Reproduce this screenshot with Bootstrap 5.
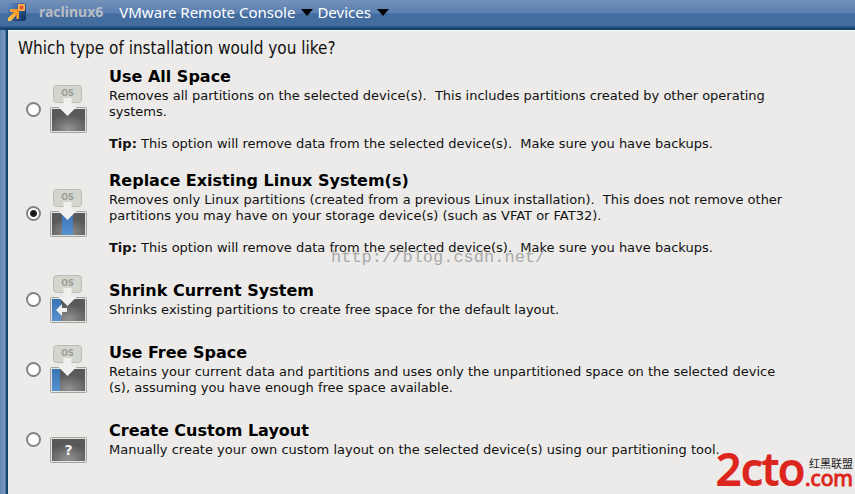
<!DOCTYPE html>
<html lang="en">
<head>
<meta charset="utf-8">
<meta name="viewport" content="width=device-width, initial-scale=1">
<title>raclinux6 - VMware Remote Console</title>
<link href="https://cdn.jsdelivr.net/npm/bootstrap@5.3.0/dist/css/bootstrap.min.css" rel="stylesheet">
<style>
body{font-family:"DejaVu Sans",sans-serif;font-size:13px;line-height:16px;color:#111;background:#ecebe9}
.console-bar{height:30px;padding:0 7px 6px;font-family:"Noto Sans",sans-serif;font-size:15px;line-height:22px;background:linear-gradient(#7391b9 0,#5a7fb0 13px,#436c9f 14px,#436c9f 26px,#1f5080 27px,#123e66 30px)}
.vm-name{color:#b9bdc4;font-weight:700;font-size:14px;margin-left:13px;margin-right:16px}
.menu-btn,.menu-btn:hover{color:#fff;font:inherit}
.menu-btn svg{margin-left:6px}
.frame-edge{width:8px;background:linear-gradient(90deg,#6488b5 0,#7a9ac2 5px,#1b4f7f 6px,#123e66 8px)}
.question{font-family:"DejaVu Sans Condensed","DejaVu Sans",sans-serif;font-size:17px;line-height:20px;font-weight:400}
.install-pane{padding:7px 9px 0 10px;border-top:1px solid #f8f8f8}
.choices{gap:18px;padding:8px 0 24px 8px}
.choice{min-height:50px}
.choice input{appearance:none;width:15px;height:15px;margin:0 8px 0 0;border:2px solid #858380;border-radius:50%;background:#fff}
.choice input:checked{background:radial-gradient(circle,#111 0,#222 3px,#fff 4px)}
.disk-icon{width:40px;height:50px;margin-right:20px}
.choice-text{max-width:680px;white-space:pre-wrap}
.choice-title{font-size:16px;line-height:22px;font-weight:700;color:#000}
.watermark{left:331px;top:248px;font:17px/20px "Liberation Mono",monospace;color:#aaa}
.site-logo{right:2px;bottom:0;color:#dc261d;font-family:"Noto Sans",sans-serif}
.logo-main{font-size:44px;line-height:52px;-webkit-text-stroke:2px #dc261d}
.logo-com{font-size:21px;line-height:18px;padding-bottom:7px;-webkit-text-stroke:1px #dc261d}
.logo-cn{font:11px/12px "Noto Sans CJK SC",sans-serif;color:#222}
</style>
<script src="https://cdn.jsdelivr.net/npm/bootstrap@5.3.0/dist/js/bootstrap.bundle.min.js"></script>
</head>
<body class="min-vh-100 d-flex flex-column position-relative overflow-x-hidden">
<svg width="0" height="0" class="position-absolute" aria-hidden="true">
<defs>
<radialGradient id="metal" cx=".5" cy=".9" r=".65"><stop offset="0" stop-color="#929292"/><stop offset="1" stop-color="#595959"/></radialGradient>
<linearGradient id="blue" x1="0" y1="0" x2="0" y2="1"><stop offset="0" stop-color="#3973b5"/><stop offset="1" stop-color="#5791d0"/></linearGradient>
<linearGradient id="navy" x1="0" y1="0" x2="1" y2="1"><stop offset="0" stop-color="#6390c8"/><stop offset="1" stop-color="#0b2a5c"/></linearGradient>
<linearGradient id="gold" x1="0" y1="1" x2="1" y2="0"><stop offset="0" stop-color="#ffcc54"/><stop offset="1" stop-color="#f58a1f"/></linearGradient>
<g id="os-tag"><rect x="4.5" y="1.5" width="28" height="17" rx="3" fill="#d2d6cd" stroke="#b9bdb5"/><text x="18.5" y="12" text-anchor="middle" font-family="DejaVu Sans" font-size="8" font-weight="700" fill="#999d96">OS</text></g>
<g id="drive"><rect x="1.5" y="23.5" width="36" height="25" rx="1" fill="#e3e3df" stroke="#a3a39f"/><rect x="3" y="25" width="33" height="22" fill="url(#metal)"/></g>
<path id="down-arrow" d="M14.500 14h8v9h5L18.500 32 9.500 23h5z" fill="#f0f0ee"/>
</defs>
</svg>
<header class="console-bar d-flex align-items-center">
<svg width="19" height="20" viewBox="0 0 19 20" aria-hidden="true"><rect x="1" y="1" width="18" height="18" rx="3" fill="url(#navy)"/><path d="M1 19v-3l6-6H3V7h9v10H9.500v-4L4 19z" fill="url(#gold)"/><rect x="11" y="2" width="7" height="7" rx="1" fill="#ffb04a"/><circle cx="14.500" cy="5.500" r="2" fill="#e8502a"/></svg>
<span class="vm-name">raclinux6</span>
<button type="button" class="menu-btn btn btn-link p-0 border-0 text-decoration-none d-flex align-items-center">VMware Remote Console<svg width="12" height="7" aria-hidden="true"><path d="M0 0h12L6 7z"/></svg></button>
<button type="button" class="menu-btn btn btn-link p-0 border-0 text-decoration-none d-flex align-items-center ms-1">Devices<svg width="12" height="7" aria-hidden="true"><path d="M0 0h12L6 7z"/></svg></button>
</header>
<div class="d-flex flex-grow-1">
<div class="frame-edge flex-shrink-0"></div>
<main class="install-pane flex-grow-1">
<form>
<h1 class="question m-0" id="question">Which type of installation would you like?</h1>
<div class="choices d-flex flex-column" role="radiogroup" aria-labelledby="question">
<label class="choice d-flex align-items-center"><input type="radio" name="layout" class="flex-shrink-0"><svg class="disk-icon flex-shrink-0" viewBox="0 0 40 50" aria-hidden="true"><use href="#os-tag"/><use href="#drive"/><use href="#down-arrow"/></svg><span class="choice-text"><span class="choice-title d-block">Use All Space</span>Removes all partitions on the selected device(s).  This includes partitions created by other operating systems.

<b>Tip:</b> This option will remove data from the selected device(s).  Make sure you have backups.</span></label>
<label class="choice d-flex align-items-center"><input type="radio" name="layout" checked class="flex-shrink-0"><svg class="disk-icon flex-shrink-0" viewBox="0 0 40 50" aria-hidden="true"><use href="#os-tag"/><use href="#drive"/><path d="M13 25h11v22H13z" fill="url(#blue)"/><use href="#down-arrow"/></svg><span class="choice-text"><span class="choice-title d-block">Replace Existing Linux System(s)</span>Removes only Linux partitions (created from a previous Linux installation).  This does not remove other partitions you may have on your storage device(s) (such as VFAT or FAT32).

<b>Tip:</b> This option will remove data from the selected device(s).  Make sure you have backups.</span></label>
<label class="choice d-flex align-items-center"><input type="radio" name="layout" class="flex-shrink-0"><svg class="disk-icon flex-shrink-0" viewBox="0 0 40 50" aria-hidden="true"><use href="#os-tag"/><use href="#drive"/><path d="M3 25h9v22H3z" fill="url(#blue)"/><use href="#down-arrow"/><path d="M7 36l6-6v4h5v4h-5v4z" fill="#f0f0ee"/></svg><span class="choice-text"><span class="choice-title d-block">Shrink Current System</span>Shrinks existing partitions to create free space for the default layout.</span></label>
<label class="choice d-flex align-items-center"><input type="radio" name="layout" class="flex-shrink-0"><svg class="disk-icon flex-shrink-0" viewBox="0 0 40 50" aria-hidden="true"><use href="#os-tag"/><use href="#drive"/><path d="M3 25h8v22H3z" fill="url(#blue)"/><use href="#down-arrow"/></svg><span class="choice-text"><span class="choice-title d-block">Use Free Space</span>Retains your current data and partitions and uses only the unpartitioned space on the selected device<wbr>(s), assuming you have enough free space available.</span></label>
<label class="choice d-flex align-items-center"><input type="radio" name="layout" class="flex-shrink-0"><svg class="disk-icon flex-shrink-0" viewBox="0 0 40 50" aria-hidden="true"><use href="#drive"/><text x="19.500" y="41" text-anchor="middle" font-family="DejaVu Sans" font-size="14" font-weight="700" fill="#f4f4f4">?</text></svg><span class="choice-text"><span class="choice-title d-block">Create Custom Layout</span>Manually create your own custom layout on the selected device(s) using our partitioning tool.</span></label>
</div>
</form>
</main>
</div>
<div class="watermark position-absolute pe-none">http://blog.csdn.net/</div>
<div class="site-logo position-absolute d-flex align-items-end pe-none"><span class="logo-main">2cto</span><span class="d-flex flex-column"><span class="logo-cn text-end">红黑联盟</span><span class="logo-com">.com</span></span></div>
</body>
</html>
